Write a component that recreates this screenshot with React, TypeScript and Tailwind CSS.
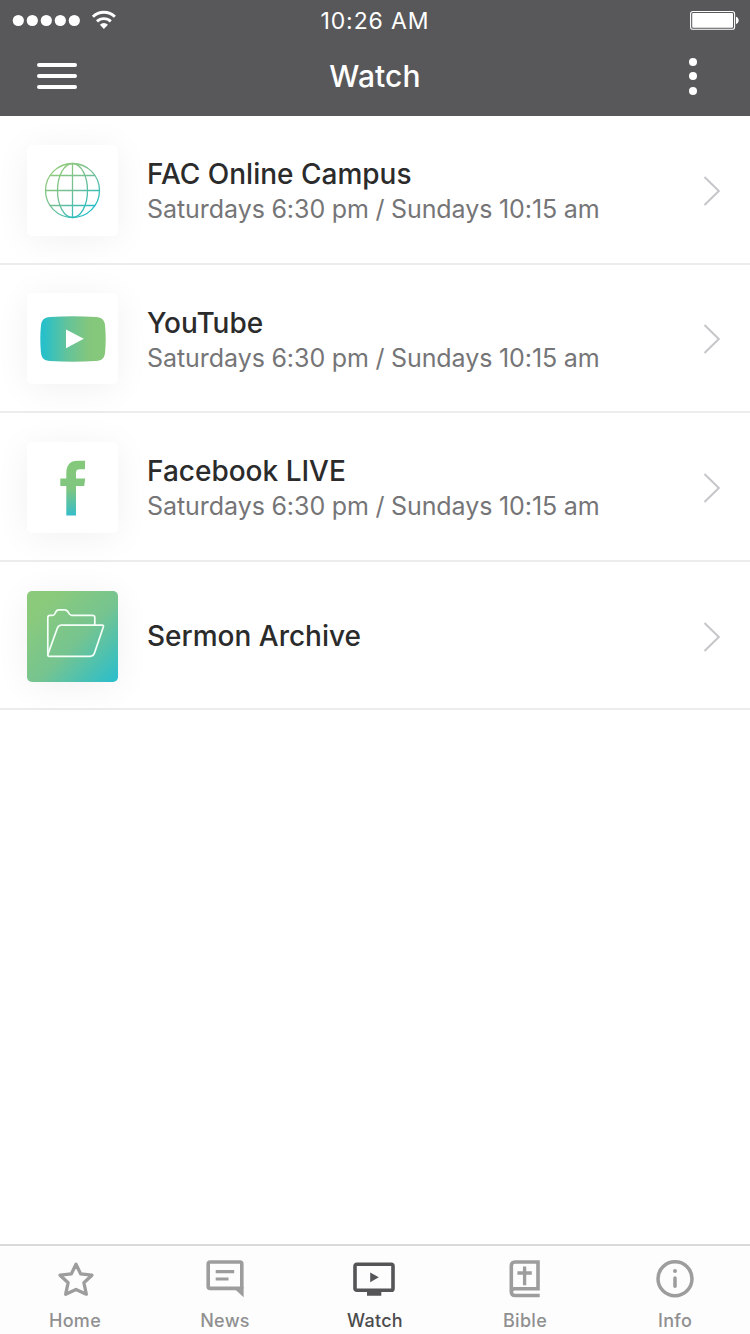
import type { ReactNode } from "react";

type IconProps = { className?: string };

function Signal() {
  return (
    <svg width="108" height="24" viewBox="0 0 108 24" fill="#fff">
      <circle cx="6.3" cy="12.500" r="5.600" />
      <circle cx="20.300" cy="12.500" r="5.600" />
      <circle cx="34.300" cy="12.500" r="5.600" />
      <circle cx="48.300" cy="12.500" r="5.600" />
      <circle cx="62.300" cy="12.500" r="5.600" />
      <g fill="none" stroke="#fff" strokeWidth="2.900">
        <path d="M80.900 8.800a15.600 15.600 0 0 1 22 0" />
        <path d="M85 13.400a9.900 9.900 0 0 1 13.800 0" />
      </g>
      <path d="M91.900 21l-4-4.300a5.800 5.800 0 0 1 8 0z" />
    </svg>
  );
}

function Battery() {
  return (
    <svg width="50" height="20" viewBox="0 0 50 20" fill="#fff">
      <rect x="0.6" y="1.500" width="44" height="17.800" rx="2.400" fill="none" stroke="#fff" strokeWidth="1.100" />
      <rect x="2.200" y="3.100" width="40.800" height="14.600" rx="1" />
      <path d="M46 6.800c3.600 1 3.600 6.200 0 7.200z" />
    </svg>
  );
}

function Globe() {
  return (
    <svg width="58" height="58" viewBox="-28.500 -29.500 58 58" fill="none" stroke="url(#globe)" strokeWidth="1.300">
      <defs>
        <linearGradient id="globe" gradientUnits="userSpaceOnUse" x1="-14" y1="-20" x2="20" y2="20">
          <stop offset="0" stopColor="#8bc97c" />
          <stop offset="0.45" stopColor="#74bf95" />
          <stop offset="1" stopColor="#1fbcc9" />
        </linearGradient>
      </defs>
      <circle r="27" />
      <ellipse rx="15" ry="27" />
      <path d="M0-27L0.01 27M-27 0L27 0.01M-22.500-15L22.500-14.990M-22.500 15L22.500 15.010" />
    </svg>
  );
}

function YouTube() {
  return (
    <svg width="66" height="46" viewBox="0 0 66 46">
      <defs>
        <linearGradient id="tube">
          <stop offset="0.05" stopColor="#27c0ca" />
          <stop offset="0.4" stopColor="#62c39b" />
          <stop offset="0.75" stopColor="#84c67c" />
          <stop offset="1" stopColor="#86c87a" />
        </linearGradient>
      </defs>
      <path
        d="M10 .9Q33-.3 56 .9C62 1.300 64.300 4 65 9Q66.400 23 65 37C64.300 42 62 44.700 56 45.100Q33 46.300 10 45.100C4 44.700 1.700 42 1 37Q-.4 23 1 9C1.700 4 4 1.300 10 .9Z"
        fill="url(#tube)"
      />
      <path d="M26 13.500L43.800 22.700L26 32.300Z" fill="#fff" />
    </svg>
  );
}

function Facebook() {
  return (
    <svg className="mt-px" width="26" height="56" viewBox="0 0 26 56">
      <defs>
        <linearGradient id="face" x2="0" y2="1">
          <stop offset="0" stopColor="#84c97a" />
          <stop offset="0.5" stopColor="#80c67f" />
          <stop offset="1" stopColor="#36bdc9" />
        </linearGradient>
      </defs>
      <path
        d="M6.300 55.500V26H.3V18.600H6.300V13.500C6.300 5 10 .8 17.500 .8H25V9.300H20C17 9.300 16 10.300 16 13.200V18.600H25.200L24.200 26H16V55.500Z"
        fill="url(#face)"
      />
    </svg>
  );
}

function Folder() {
  return (
    <svg className="mb-1" width="60" height="52" viewBox="0 0 60 52" fill="none" stroke="#f4fff8" strokeWidth="1.700" strokeLinejoin="round">
      <path d="M2.800 47V9.500Q2.800 7.300 5 7.300H7.600Q9.300 7.300 10 5.500Q11.200 1.800 14 1.800H19.800Q22.300 1.800 23.700 5Q24.700 7.300 26.500 7.300H47.500Q49.800 7.300 49.800 9.500V17.200" />
      <path d="M16.500 17.200H57.200Q59 17.200 58.300 19L49.400 45.300Q48.300 48.300 45.300 48.300H4.500Q2.200 48.300 3 46L12.300 20.200Q13.500 17.200 16.500 17.200Z" />
    </svg>
  );
}

function Star({ className }: IconProps) {
  return (
    <svg className={className} width="40" height="40" viewBox="-1 0 40 40" fill="none" stroke="currentColor" strokeWidth="3.300" strokeLinejoin="round">
      <path d="M20 5.200L24.600 14.800L35.900 16.200L27.900 23.700L30.300 35.200L20 30.400L9.700 35.200L12.100 23.700L4.100 16.200L15.400 14.800Z" />
    </svg>
  );
}

function News({ className }: IconProps) {
  return (
    <svg className={className} width="40" height="40" viewBox="0 0 40 40" fill="none" stroke="currentColor" strokeWidth="3.600">
      <path d="M35.600 29.400H5Q3.200 29.400 3.200 27.600V4.800Q3.200 3 5 3H35Q36.800 3 36.800 4.800V29.400" />
      <path d="M31 31.200L38.600 38.200V28H31Z" fill="currentColor" stroke="none" />
      <path d="M10.700 12.600H29.200M10.700 20H23.500" strokeWidth="3.200" />
    </svg>
  );
}

function WatchIcon({ className }: IconProps) {
  return (
    <svg className={className} width="44" height="40" viewBox="1 0 44 40" fill="currentColor">
      <rect x="3" y="5.200" width="38" height="26" rx="1.800" fill="none" stroke="currentColor" strokeWidth="3.600" />
      <path d="M15 32H29.300V36.800H15ZM18.200 13.500L26.800 18.300L18.200 23.300Z" />
    </svg>
  );
}

function Bible({ className }: IconProps) {
  return (
    <svg className={className} width="40" height="40" viewBox="0 0 40 40" fill="none" stroke="currentColor" strokeWidth="3.600">
      <path d="M34.700 36.500H10Q6.300 36.500 6.300 32.500V7Q6.300 3 10 3H33V29.700H9.500Q6.300 29.700 6.300 33" />
      <path d="M19.600 7.500V26.300M12.400 14H26.800" strokeWidth="3.300" />
    </svg>
  );
}

function Info({ className }: IconProps) {
  return (
    <svg className={className} width="40" height="40" viewBox="0 0 40 40" fill="none" stroke="currentColor">
      <circle cx="20" cy="19.800" r="17" strokeWidth="3.500" />
      <circle cx="20" cy="12" r="2" fill="currentColor" stroke="none" />
      <path d="M20 19V27.200" strokeWidth="3.500" strokeLinecap="round" />
    </svg>
  );
}

function Chevron() {
  return (
    <svg className="mt-px" width="18" height="32" viewBox="0 0 18 32" fill="none" stroke="#c6c6ca" strokeWidth="2">
      <path d="M1.500 2L15.800 16L1.500 30" />
    </svg>
  );
}

type Entry = { title: string; times?: string; icon: ReactNode; filled?: boolean };

const times = "Saturdays 6:30 pm / Sundays 10:15 am";

const entries: Entry[] = [
  { title: "FAC Online Campus", times, icon: <Globe /> },
  { title: "YouTube", times, icon: <YouTube /> },
  { title: "Facebook LIVE", times, icon: <Facebook /> },
  { title: "Sermon Archive", icon: <Folder />, filled: true },
];

const tabs = [
  { label: "Home", Icon: Star },
  { label: "News", Icon: News },
  { label: "Watch", Icon: WatchIcon, active: true },
  { label: "Bible", Icon: Bible },
  { label: "Info", Icon: Info },
];

function Row({ title, times, icon, filled }: Entry) {
  return (
    <li className="flex h-[148.600px] items-center border-b-2 border-[#ececed] pt-[2px] pr-[29px] pl-[27px]">
      <div
        className={
          "flex size-[91px] shrink-0 items-center justify-center rounded-[5px] shadow-[0_4px_36px_rgba(0,0,0,0.06)] " +
          (filled ? "bg-linear-[135deg,#8bca7b_15%,#76c490_55%,#2bbecb_98%] pl-[5px]" : "bg-white")
        }
      >
        {icon}
      </div>
      <div className={"ml-[29px] flex-1 whitespace-nowrap " + (times ? "pt-[3px]" : "")}>
        <h2 className="text-[28px] leading-[35px] font-medium text-[#2b2b2c]">{title}</h2>
        {times && (
          <p className="text-[25px] leading-[34px] tracking-[-0.050px] [word-spacing:-0.400px] text-[#757577]">
            {times}
          </p>
        )}
      </div>
      <Chevron />
    </li>
  );
}

export default function App() {
  return (
    <div className="flex h-[1334px] w-[750px] flex-col overflow-hidden bg-white font-['Inter',sans-serif]">
      <header className="h-[116px] shrink-0 bg-[#58585a] text-white">
        <div className="grid h-10 grid-cols-3 items-center pr-[10px] pl-3">
          <Signal />
          <span className="pt-[2px] pr-[2px] text-center text-[23px] leading-[38px] tracking-[0.900px]">10:26 AM</span>
          <div className="flex justify-end">
            <Battery />
          </div>
        </div>
        <div className="flex h-[72px] items-center justify-between pr-[53px] pl-[37px]">
          <div className="flex w-[60px] flex-col gap-[7px]">
            <span className="h-1 w-10 rounded-full bg-white" />
            <span className="h-1 w-10 rounded-full bg-white" />
            <span className="h-1 w-10 rounded-full bg-white" />
          </div>
          <h1 className="text-center text-[30px] font-medium tracking-[0.100px]">Watch</h1>
          <div className="flex w-11 flex-col items-end gap-[6.500px]">
            <span className="size-2 rounded-full bg-white" />
            <span className="size-2 rounded-full bg-white" />
            <span className="size-2 rounded-full bg-white" />
          </div>
        </div>
      </header>
      <ul className="flex-1">
        {entries.map((entry) => (
          <Row key={entry.title} {...entry} />
        ))}
      </ul>
      <nav className="grid h-[90px] shrink-0 grid-cols-5 border-t-2 border-[#dadada] bg-[#fdfdfd] pt-[13px]">
        {tabs.map(({ label, Icon, active }) => (
          <div
            key={label}
            className={"flex flex-col items-center " + (active ? "text-[#555557]" : "text-[#9d9d9d]")}
          >
            <Icon />
            <span
              className={
                "mt-[10px] text-[18px] leading-6 font-medium tracking-[0.300px] " +
                (active ? "text-[#4b4b4d]" : "text-[#909091]")
              }
            >
              {label}
            </span>
          </div>
        ))}
      </nav>
    </div>
  );
}
